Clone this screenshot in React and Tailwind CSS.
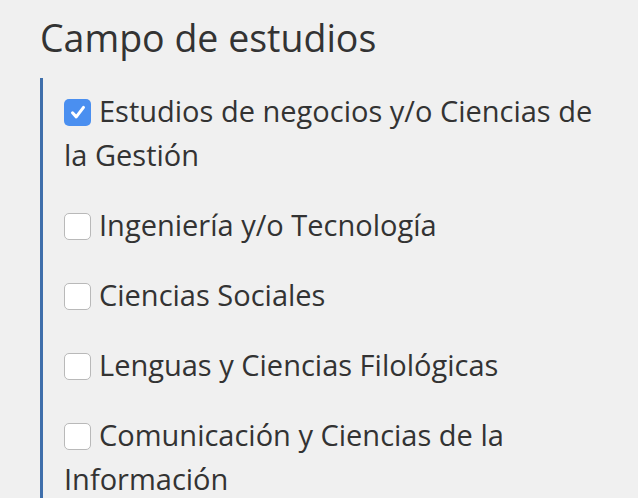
import React from 'react';

const fields = [
  { label: 'Estudios de negocios y/o Ciencias de la Gestión', checked: true },
  { label: 'Ingeniería y/o Tecnología' },
  { label: 'Ciencias Sociales' },
  { label: 'Lenguas y Ciencias Filológicas' },
  { label: 'Comunicación y Ciencias de la Información' },
];

const Box = ({ checked }) =>
  checked ? (
    <span className="inline-flex items-center justify-center align-middle w-[27px] h-[27px] mr-[8px] -mt-[4px] rounded-[5px] bg-[#4a8ff0]">
      <svg width="20" height="20" viewBox="0 0 16 16" fill="none">
        <path d="M3.6 8.6l3 3.3 5.8-7.6" stroke="white" strokeWidth="2.4" strokeLinecap="round" strokeLinejoin="round" />
      </svg>
    </span>
  ) : (
    <span className="inline-block align-middle w-[27px] h-[27px] mr-[8px] -mt-[4px] rounded-[5px] bg-white border border-[#b9b9b9]" />
  );

export default function App() {
  return (
    <div className="min-h-screen bg-[#f0f0f0] text-[#333] pl-[40px] pr-[34px] overflow-hidden" style={{ fontFamily: '"Open Sans", Lato, sans-serif' }}>
      <h2 className="pt-[15px] mb-[17px] text-[37.5px] leading-[46px] font-normal">Campo de estudios</h2>
      <div className="border-l-[3px] border-[#3f6fab] pl-[21px] pt-[11px] h-[440px]">
        {fields.map((f) => (
          <label key={f.label} className="block mb-[26px] text-[29px] leading-[44px]">
            <Box checked={f.checked} />
            {f.label}
          </label>
        ))}
      </div>
    </div>
  );
}
